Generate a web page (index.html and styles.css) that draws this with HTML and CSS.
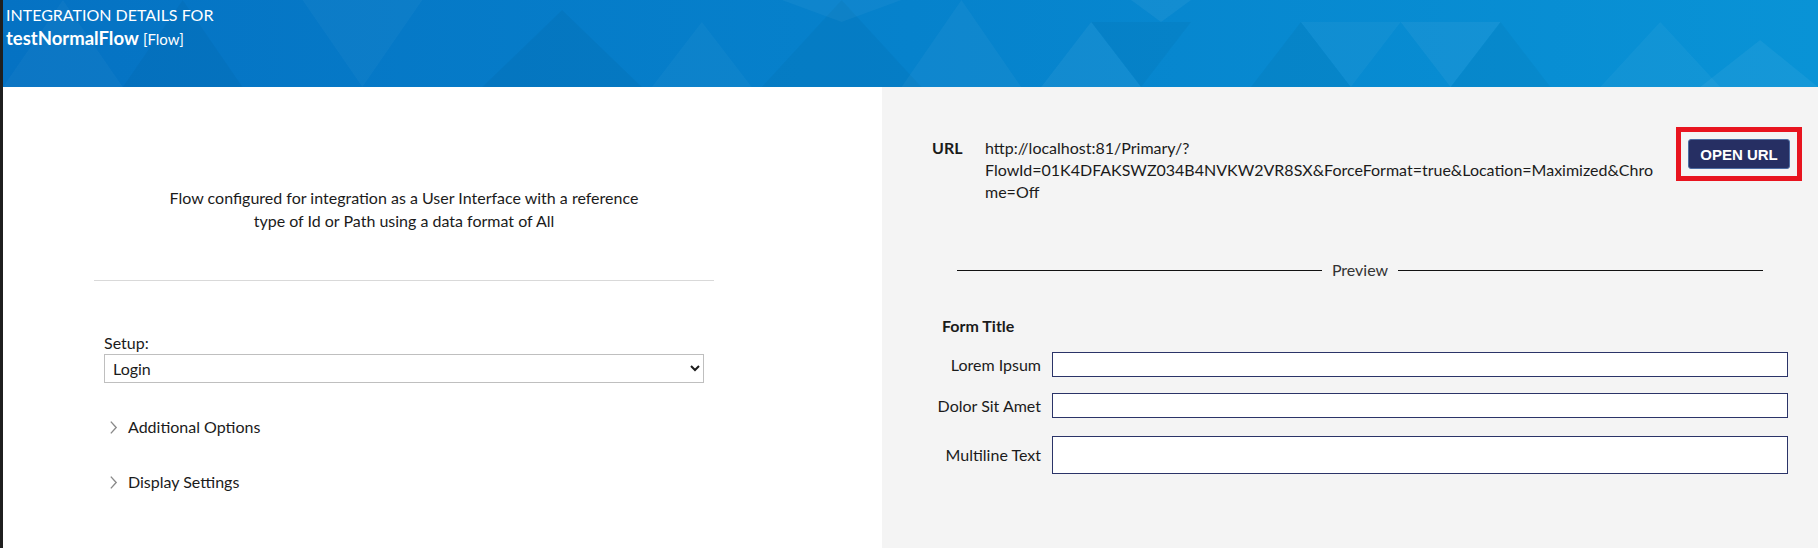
FILE: index.html
```html
<!DOCTYPE html>
<html lang="en">
<head>
    <meta charset="UTF-8">
    <meta name="viewport" content="width=device-width, initial-scale=1.0">
    <title>Integration Details</title>
    <link rel="stylesheet" href="styles.css">
</head>
<body>
    <header class="page-header">
        <svg class="header-pattern" viewBox="0 0 1818 87" preserveAspectRatio="none">
            <polygon points="0,87 60,0 120,87" fill="#ffffff" fill-opacity="0.03"/>
            <polygon points="120,87 180,0 240,87" fill="#000000" fill-opacity="0.03"/>
            <polygon points="300,0 360,87 420,0" fill="#ffffff" fill-opacity="0.03"/>
            <polygon points="480,87 560,10 640,87" fill="#000000" fill-opacity="0.035"/>
            <polygon points="650,87 700,22 750,87" fill="#ffffff" fill-opacity="0.03"/>
            <polygon points="760,87 840,0 920,87" fill="#000000" fill-opacity="0.03"/>
            <polygon points="780,0 840,22 900,0" fill="#ffffff" fill-opacity="0.04"/>
            <polygon points="900,87 960,0 1020,87" fill="#ffffff" fill-opacity="0.04"/>
            <polygon points="1040,87 1090,22 1140,87" fill="#ffffff" fill-opacity="0.05"/>
            <polygon points="1090,22 1140,87 1190,22" fill="#000000" fill-opacity="0.03"/>
            <polygon points="1130,0 1160,22 1190,0" fill="#ffffff" fill-opacity="0.05"/>
            <polygon points="1250,87 1300,22 1350,87" fill="#000000" fill-opacity="0.035"/>
            <polygon points="1300,22 1350,87 1400,22" fill="#ffffff" fill-opacity="0.04"/>
            <polygon points="1400,22 1450,87 1500,22" fill="#ffffff" fill-opacity="0.05"/>
            <polygon points="1450,87 1500,22 1550,87" fill="#000000" fill-opacity="0.03"/>
            <polygon points="1600,87 1660,22 1720,87" fill="#ffffff" fill-opacity="0.04"/>
            <polygon points="1700,87 1760,40 1818,87" fill="#ffffff" fill-opacity="0.05"/>
        </svg>
        <div class="header-caption">INTEGRATION DETAILS FOR</div>
        <div class="header-name"><strong>testNormalFlow</strong> <span>[Flow]</span></div>
    </header>

    <main class="details">
        <section class="config-pane">
            <p class="config-summary">Flow configured for integration as a User Interface with a reference type of Id or Path using a data format of All</p>
            <hr class="divider">

            <div class="setup">
                <label for="setup-select">Setup:</label>
                <select id="setup-select" class="setup-select">
                    <option>Login</option>
                </select>
            </div>

            <div class="expander">
                <svg class="chevron" viewBox="0 0 8 14"><polyline points="1.5,1.5 6.5,7 1.5,12.5" fill="none" stroke="#8a8a8a" stroke-width="1.3"/></svg>
                <span>Additional Options</span>
            </div>
            <div class="expander">
                <svg class="chevron" viewBox="0 0 8 14"><polyline points="1.5,1.5 6.5,7 1.5,12.5" fill="none" stroke="#8a8a8a" stroke-width="1.3"/></svg>
                <span>Display Settings</span>
            </div>
        </section>

        <section class="preview-pane">
            <div class="url-row">
                <div class="url-label">URL</div>
                <div class="url-value">http://localhost:81/Primary/?FlowId=01K4DFAKSWZ034B4NVKW2VR8SX&amp;ForceFormat=true&amp;Location=Maximized&amp;Chrome=Off</div>
                <div class="highlight">
                    <button class="open-url">OPEN URL</button>
                </div>
            </div>

            <div class="preview-title"><span>Preview</span></div>

            <div class="form-preview">
                <div class="form-title">Form Title</div>
                <div class="form-grid">
                    <label>Lorem Ipsum</label>
                    <input type="text" class="field">
                    <label>Dolor Sit Amet</label>
                    <input type="text" class="field">
                    <label>Multiline Text</label>
                    <textarea class="field field-multi"></textarea>
                </div>
            </div>
        </section>
    </main>
</body>
</html>
```

FILE: styles.css
```css
html, body {
    height: 100%;
}

body {
    margin: 0;
    border-left: 3px solid #1f1f1f;
    display: flex;
    flex-direction: column;
    font-family: "Lato", "Open Sans", sans-serif;
    font-size: 16px;
    color: #1b1b1b;
    overflow: hidden;
}

/* bandeau bleu */
.page-header {
    position: relative;
    height: 87px;
    flex: none;
    padding: 5px 3px 0;
    box-sizing: border-box;
    background: linear-gradient(to right, #0572c3, #0682cc 50%, #0993d6);
    color: #fff;
}

.header-pattern {
    position: absolute;
    top: 0;
    left: 0;
    width: 100%;
    height: 100%;
}

.header-caption,
.header-name {
    position: relative;
}

.header-caption {
    font-size: 16px;
    line-height: 20px;
}

.header-name {
    margin-top: 2px;
    line-height: 22px;
}

.header-name strong {
    font-size: 18.5px;
}

.header-name span {
    font-size: 15px;
}

.details {
    flex: 1;
    display: flex;
}

/* panneau gauche */
.config-pane {
    width: 879px;
    flex: none;
    background-color: #fff;
    padding: 0 0 0 91px;
    box-sizing: border-box;
}

.config-pane > * {
    width: 620px;
}

.config-summary {
    margin: 99px 0 0;
    padding: 0 65px;
    box-sizing: border-box;
    text-align: center;
    line-height: 23px;
}

.divider {
    margin: 48px 0 0;
    border: 0;
    border-top: 1px solid #d9d9d9;
}

.setup {
    padding: 0 10px;
    box-sizing: border-box;
    margin-top: 52px;
}

.setup label {
    display: block;
    line-height: 20px;
}

.setup-select {
    display: block;
    width: 100%;
    height: 29px;
    margin-top: 1px;
    font-family: inherit;
    font-size: 16px;
    color: #1b1b1b;
    background-color: #fff;
    border: 1px solid #bfbfbf;
    border-radius: 0;
    padding: 0 4px;
}

.expander {
    display: flex;
    align-items: center;
    gap: 10px;
    padding-left: 15px;
    line-height: 20px;
    margin-top: 34px;
    box-sizing: border-box;
}

.expander + .expander {
    margin-top: 35px;
}

.chevron {
    width: 9px;
    height: 15px;
}

/* panneau droit */
.preview-pane {
    flex: 1;
    background-color: #f4f4f4;
    padding: 50px 16px 0 50px;
}

.url-row {
    display: flex;
    align-items: flex-start;
}

.url-label {
    font-weight: bold;
    line-height: 22px;
    width: 53px;
    flex: none;
}

.url-value {
    width: 681px;
    line-height: 22px;
    overflow-wrap: anywhere;
}

.highlight {
    margin: -10px 0 0 10px;
    border: 5px solid #e8141f;
    padding: 7px;
}

.open-url {
    display: block;
    width: 102px;
    height: 30px;
    background-color: #262f63;
    border: 1px solid #4c6ca3;
    border-radius: 3px;
    color: #fff;
    font-family: "Liberation Sans", Arial, sans-serif;
    font-weight: bold;
    font-size: 15px;
    padding: 0;
}

.preview-title {
    display: flex;
    align-items: center;
    gap: 10px;
    margin: 57px 39px 0 25px;
    line-height: 20px;
    color: #333;
}

.preview-title::before,
.preview-title::after {
    content: "";
    flex: 1;
    border-top: 1px solid #111;
}

.form-preview {
    margin: 36px 14px 0 1px;
}

.form-title {
    font-weight: bold;
    line-height: 20px;
    margin-left: 9px;
}

.form-grid {
    display: grid;
    grid-template-columns: 108px 1fr;
    column-gap: 11px;
    row-gap: 16px;
    align-items: center;
    margin-top: 16px;
}

.form-grid label {
    text-align: right;
    white-space: nowrap;
}

.field {
    display: block;
    height: 25px;
    box-sizing: border-box;
    border: 1px solid #2b3468;
    background-color: #fff;
    margin: 0;
    font-family: inherit;
}

.field-multi {
    height: 38px;
    margin-top: 2px;
    resize: none;
}
```
